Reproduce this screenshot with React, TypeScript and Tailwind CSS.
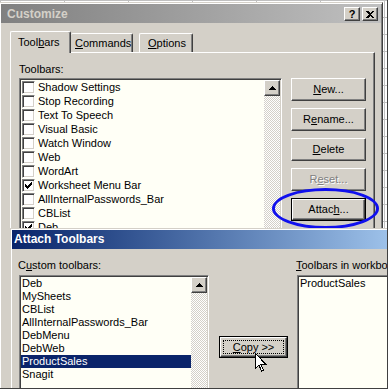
import React from "react";

const raised =
  "border border-t-white border-l-white border-r-[#404040] border-b-[#404040] shadow-[inset_-1px_-1px_#808080] bg-[#d4d0c8]";
const sunken =
  "border border-t-[#808080] border-l-[#808080] border-r-white border-b-white shadow-[inset_1px_1px_#404040,inset_-1px_-1px_#d4d0c8] p-[1px]";
const windowFrame =
  "border border-t-[#d4d0c8] border-l-[#d4d0c8] border-r-[#404040] border-b-[#404040] bg-[#d4d0c8] p-[1px] shadow-[inset_1px_1px_#ffffff,inset_-1px_-1px_#808080]";

const toolbars: [string, boolean][] = [
  ["Shadow Settings", false],
  ["Stop Recording", false],
  ["Text To Speech", false],
  ["Visual Basic", false],
  ["Watch Window", false],
  ["Web", false],
  ["WordArt", false],
  ["Worksheet Menu Bar", true],
  ["AllInternalPasswords_Bar", false],
  ["CBList", false],
  ["Deb", true],
  ["DebMenu", false],
];

const custom = ["Deb", "MySheets", "CBList", "AllInternalPasswords_Bar", "DebMenu", "DebWeb", "ProductSales", "Snagit"];

function Check({ checked }: { checked: boolean }) {
  return (
    <span className="flex h-[13px] w-[13px] shrink-0 items-center justify-center border border-t-[#808080] border-l-[#808080] border-r-white border-b-white bg-white shadow-[inset_1px_1px_#404040,inset_-1px_-1px_#d4d0c8]">
      {checked && (
        <svg width="7" height="7" viewBox="0 0 7 7" shapeRendering="crispEdges">
          <path d="M0 2h1v1h1v1h1v-1h1v-1h1v-1h1v-1h1v3h-1v1h-1v1h-1v1h-1v1h-1v-1h-1v-1h-1z" fill="#000" />
        </svg>
      )}
    </span>
  );
}

function Scrollbar() {
  return (
    <div className="h-full w-[16px] shrink-0 bg-[repeating-conic-gradient(#ffffff_0%_25%,#d4d0c8_0%_50%)] bg-[length:2px_2px]">
      <div className={`flex h-[16px] w-[16px] items-center justify-center ${raised}`}>
        <svg width="7" height="4" viewBox="0 0 7 4" shapeRendering="crispEdges">
          <path d="M3 0h1v1h1v1h1v1h1v1h-7v-1h1v-1h1v-1h1z" fill="#000" />
        </svg>
      </div>
    </div>
  );
}

function Btn({ children, disabled, isDefault }: { children: React.ReactNode; disabled?: boolean; isDefault?: boolean }) {
  const txt = disabled ? "text-[#808080] [text-shadow:1px_1px_#ffffff]" : "text-black";
  if (isDefault) {
    return (
      <div className="h-[23px] w-[75px] border border-black">
        <div className={`flex h-full w-full items-center justify-center ${raised} ${txt}`}>{children}</div>
      </div>
    );
  }
  return <div className={`flex h-[23px] w-[75px] items-center justify-center ${raised} ${txt}`}>{children}</div>;
}

function CapBtn({ children }: { children: React.ReactNode }) {
  return <div className={`flex h-[14px] w-[16px] items-center justify-center ${raised}`}>{children}</div>;
}

export default function App() {
  return (
    <div className="relative h-[389px] w-[388px] overflow-hidden bg-white bg-[linear-gradient(#c0c0c0_1px,transparent_1px),linear-gradient(90deg,#c0c0c0_1px,transparent_1px)] bg-[length:64px_17px] font-['Liberation_Sans',Arial,sans-serif] text-[11px] leading-[13px] text-black">
      {/* Customize dialog */}
      <div className={`absolute left-[-1px] top-[2px] h-[420px] w-[384px] ${windowFrame}`}>
        <div className="flex h-[19px] items-center justify-between bg-linear-to-r from-[#808080] to-[#c0c0c0] pl-[6px] pr-[3px] pt-[1px]">
          <span className="text-[12px] font-bold text-[#d4d0c8]">Customize</span>
          <div className="flex gap-[2px]">
            <CapBtn>
              <span className="text-[11px] font-bold leading-none">?</span>
            </CapBtn>
            <CapBtn>
              <svg width="8" height="7" viewBox="0 0 8 7" shapeRendering="crispEdges">
                <path d="M0 0h2l2 2 2-2h2l-3 3.5 3 3.5h-2l-2-2-2 2h-2l3-3.5z" fill="#000" />
              </svg>
            </CapBtn>
          </div>
        </div>

        {/* tabs */}
        <div className="ml-[9px] mt-[8px] flex h-[21px] items-end">
          <div className="relative z-10 mb-[-1px] flex h-[22px] w-[61px] items-start rounded-t-[2px] border-l border-t border-white border-r border-r-[#404040] bg-[#d4d0c8] pl-[7px] pt-[4px] shadow-[inset_-1px_0_#808080]">
            <span>
              Tool<u>b</u>ars
            </span>
          </div>
          <div className="flex h-[19px] w-[62px] items-start whitespace-nowrap rounded-t-[2px] border-t border-t-white border-r border-r-[#404040] pl-[4px] pt-[3px] shadow-[inset_-1px_0_#808080]">
            <span>
              <u>C</u>ommands
            </span>
          </div>
          <div className="ml-[6px] flex h-[19px] w-[54px] items-start rounded-t-[2px] border-l border-t border-white border-r border-r-[#404040] pl-[8px] pt-[3px] shadow-[inset_-1px_0_#808080]">
            <span>
              <u>O</u>ptions
            </span>
          </div>
        </div>

        {/* panel */}
        <div className="ml-[9px] h-[308px] w-[365px] border border-t-white border-l-white border-r-[#404040] border-b-[#404040] pl-[8px] pt-[10px] shadow-[inset_-1px_-1px_#808080]">
          <div>Toolbars:</div>
          <div className="mt-[2px] flex">
            <div className={`flex h-[240px] w-[263px] bg-[#fffff6] ${sunken}`}>
              <div className="flex-1">
                {toolbars.map(([name, on]) => (
                  <div key={name} className="flex h-[14px] items-center gap-[3px] pl-[1px]">
                    <Check checked={on} />
                    <span>{name}</span>
                  </div>
                ))}
              </div>
              <Scrollbar />
            </div>
            <div className="ml-[9px] flex flex-col gap-[7px]">
              <Btn>
                <u>N</u>ew...
              </Btn>
              <Btn>
                R<u>e</u>name...
              </Btn>
              <Btn>
                <u>D</u>elete
              </Btn>
              <Btn disabled>
                R<u>e</u>set...
              </Btn>
              <Btn isDefault>
                Attac<u>h</u>...
              </Btn>
            </div>
          </div>
        </div>
      </div>

      {/* highlight ring around Attach */}
      <div className="absolute left-[272px] top-[188px] h-[41px] w-[107px] rounded-[50%] border-[3px] border-[#1010ee]" />

      {/* Attach Toolbars dialog */}
      <div className={`absolute left-[10px] top-[228px] h-[200px] w-[400px] ${windowFrame}`}>
        <div className="flex h-[19px] items-center bg-linear-to-r from-[#0a246a] to-[#a6caf0] pl-[2px]">
          <span className="text-[12px] font-bold text-white">Attach Toolbars</span>
        </div>
        <div className="flex pl-[6px] pt-[10px]">
          <div className="w-[191px]">
            <div>
              C<u>u</u>stom toolbars:
            </div>
            <div className={`ml-[1px] mt-[3px] flex h-[140px] w-[190px] bg-[#fffff6] ${sunken}`}>
              <div className="flex-1">
                {custom.map((name) => (
                  <div
                    key={name}
                    className={`flex h-[13px] items-center pl-[1px] ${name === "ProductSales" ? "bg-[#0a246a] text-white" : ""}`}
                  >
                    {name}
                  </div>
                ))}
              </div>
              <Scrollbar />
            </div>
          </div>
          <div className="ml-[10px] pt-[77px]">
            <div className="h-[22px] w-[69px] border border-black">
              <div className={`flex h-full w-full items-center justify-center p-[2px] ${raised}`}>
                <div className="flex h-full w-full items-center justify-center border border-dotted border-black">
                  <span>
                    <u>C</u>opy &gt;&gt;
                  </span>
                </div>
              </div>
            </div>
          </div>
          <div className="ml-[8px]">
            <div className="whitespace-nowrap">
              <u>T</u>oolbars in workbook:
            </div>
            <div className={`ml-[1px] mt-[3px] h-[140px] w-[120px] bg-[#fffff6] pl-[2px] ${sunken}`}>
              <div className="flex h-[13px] items-center">ProductSales</div>
            </div>
          </div>
        </div>
      </div>

      {/* mouse pointer */}
      <svg className="absolute left-[255px] top-[353px]" width="12" height="20" viewBox="0 0 12 20" shapeRendering="crispEdges">
        <path d="M0.5 0.5v15l3.5-3.5 2.5 6 2-1-2.5-5.5h5z" fill="#fff" stroke="#000" strokeWidth="1" />
      </svg>

      <div className="pointer-events-none absolute inset-0 border-b border-r border-[#404040]" />
    </div>
  );
}
